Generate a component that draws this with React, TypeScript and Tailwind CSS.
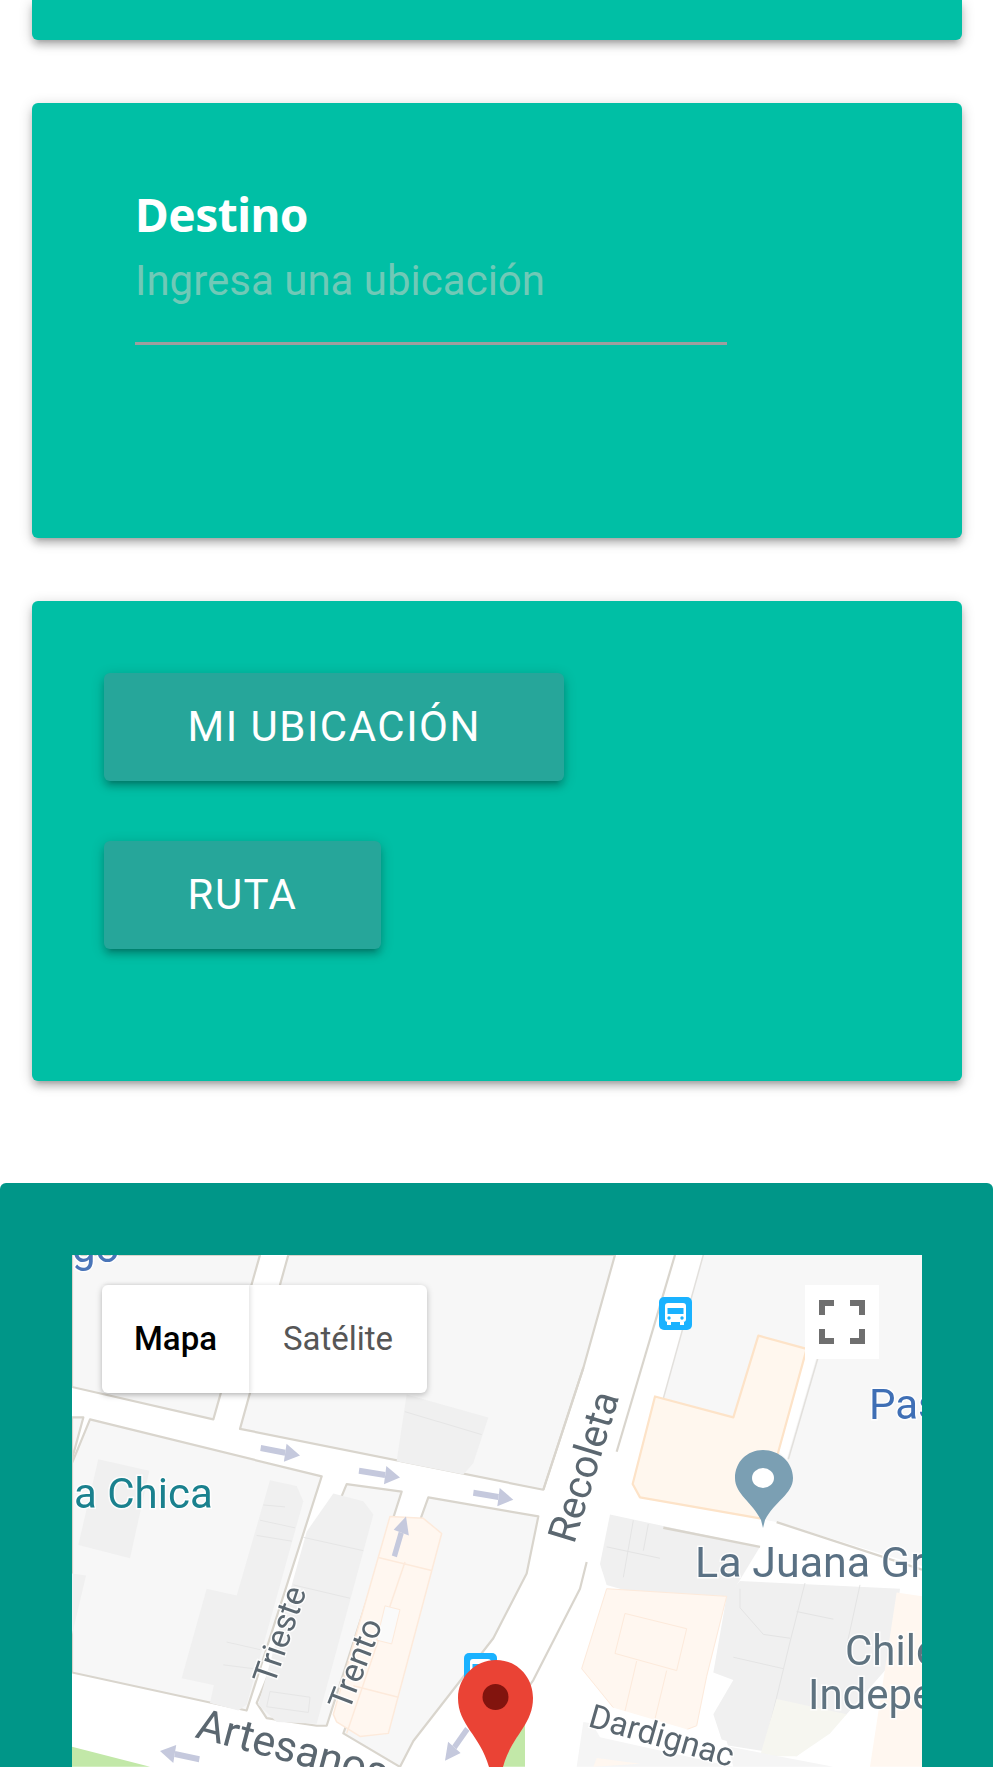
const scale = "scale(0.33333,0.38066)";
const elevation = "shadow-[0_6px_6px_rgba(0,0,0,0.14),0_8px_3px_-6px_rgba(0,0,0,0.12),0_3px_14px_rgba(0,0,0,0.2)]";

function Arrow({ x1, y1, x2, y2 }: { x1: number; y1: number; x2: number; y2: number }) {
  const dx = x2 - x1;
  const dy = y2 - y1;
  const len = Math.hypot(dx, dy);
  const ux = dx / len;
  const uy = dy / len;
  const bx = x2 - ux * 45;
  const by = y2 - uy * 45;
  const pts = `${x2},${y2} ${bx - uy * 24},${by + ux * 24} ${bx + uy * 24},${by - ux * 24}`;
  return (
    <g>
      <line x1={x1} y1={y1} x2={bx} y2={by} stroke="#c5c9dd" strokeWidth={16} />
      <polygon points={pts} fill="#c5c9dd" />
    </g>
  );
}

function Label(props: { x: number; y: number; size: number; fill: string; rotate?: number; children: string }) {
  const { x, y, size, fill, rotate, children } = props;
  return (
    <text
      x={x}
      y={y}
      fontSize={size}
      fill={fill}
      fontFamily="Roboto, sans-serif"
      stroke="#ffffff"
      strokeWidth={3}
      strokeOpacity={0.8}
      paintOrder="stroke"
      transform={rotate ? `rotate(${rotate} ${x} ${y})` : undefined}
    >
      {children}
    </text>
  );
}

function Bus({ x, y }: { x: number; y: number }) {
  return (
    <g transform={`translate(${x} ${y})`}>
      <rect width={33} height={33} rx={5} fill="#1ab2ff" />
      <rect x={6} y={6} width={21} height={19} rx={3} fill="#ffffff" />
      <rect x={8.5} y={11} width={16} height={6} fill="#1ab2ff" />
      <circle cx={10} cy={21} r={1.7} fill="#1ab2ff" />
      <circle cx={23} cy={21} r={1.7} fill="#1ab2ff" />
      <rect x={8} y={25} width={4} height={3} fill="#ffffff" />
      <rect x={21} y={25} width={4} height={3} fill="#ffffff" />
    </g>
  );
}

function MapArt() {
  const block = "#f7f7f7";
  const edge = "#d9d5cd";
  const gray = "#f0f0f0";
  const orange = "#fff7f0";
  const orangeEdge = "#fdeadb";
  return (
    <svg className="block h-full w-full blur-[0.5px]" viewBox="72 1255 850 512">
      <rect x={72} y={1255} width={850} height={512} fill="#ffffff" />
      <g transform={`translate(60 1170) ${scale}`} strokeLinejoin="round">
        <g stroke={edge} strokeWidth={2.2}>
          <polygon points="36,223 600,223 460,655 36,570" fill={block} vectorEffect="non-scaling-stroke" />
          <polygon points="685,223 1665,223 1570,520 1450,840 540,680" fill={block} vectorEffect="non-scaling-stroke" />
          <polygon points="36,770 90,655 785,805 560,1420 36,1320" fill={block} vectorEffect="non-scaling-stroke" />
          <polygon points="860,825 1025,845 800,1460 770,1460 620,1440 590,1400" fill={block} vectorEffect="non-scaling-stroke" />
          <polygon points="1105,860 1435,910 1400,1060 1300,1230 1060,1500 1020,1568 850,1480" fill={block} vectorEffect="non-scaling-stroke" />
          <polygon points="36,650 70,650 36,760" fill={block} vectorEffect="non-scaling-stroke" />
        </g>
        <g fill={gray}>
          <polygon points="115,760 268,790 210,1020 55,985" />
          <polygon points="36,1060 78,1065 36,1220" />
          <polygon points="440,1100 540,1120 470,1355 365,1335" />
          <polygon points="630,815 710,830 730,870 560,1405 535,1420 450,1400 490,1240" />
          <polygon points="820,850 910,870 940,905 770,1455 650,1450 595,1405 740,950" />
          <polygon points="1040,590 1285,650 1240,770 1210,800 1010,765" />
        </g>
        <g stroke="#e6e6e6" strokeWidth={1} fill="none">
          <polyline points="610,880 675,885" vectorEffect="non-scaling-stroke" />
          <polyline points="600,920 705,940" vectorEffect="non-scaling-stroke" />
          <polyline points="590,960 695,975" vectorEffect="non-scaling-stroke" />
          <polyline points="500,1240 600,1260" vectorEffect="non-scaling-stroke" />
          <polyline points="490,1300 580,1310" vectorEffect="non-scaling-stroke" />
          <polyline points="730,965 910,1000" vectorEffect="non-scaling-stroke" />
          <polyline points="700,1090 870,1125" vectorEffect="non-scaling-stroke" />
          <polyline points="630,1370 750,1385 745,1425 620,1410 630,1370" vectorEffect="non-scaling-stroke" />
          <polyline points="1035,635 1265,695" vectorEffect="non-scaling-stroke" />
        </g>
        <polygon
          points="990,910 1090,915 1145,955 985,1480 900,1488 830,1450 820,1430"
          fill={orange}
          stroke={orangeEdge}
          strokeWidth={1.5}
          vectorEffect="non-scaling-stroke"
        />
        <g stroke={orangeEdge} strokeWidth={1.5} fill="none">
          <polyline points="955,1018 1115,1052" vectorEffect="non-scaling-stroke" />
          <polyline points="880,1355 1015,1385" vectorEffect="non-scaling-stroke" />
          <polyline points="1035,1030 860,1480" vectorEffect="non-scaling-stroke" />
        </g>
        <polygon points="975,1145 1020,1155 995,1245 950,1235" fill="#fafafa" stroke={orangeEdge} vectorEffect="non-scaling-stroke" />
        <polygon points="36,1515 270,1568 36,1568" fill="#c2e8a8" />
        <polygon points="1395,1450 1320,1568 1395,1568" fill="#c2e8a8" />
        <Arrow x1={602} y1={730} x2={720} y2={750} />
        <Arrow x1={897} y1={790} x2={1020} y2={808} />
        <Arrow x1={1240} y1={848} x2={1360} y2={866} />
        <Arrow x1={1003} y1={1015} x2={1038} y2={910} />
        <Arrow x1={418} y1={1548} x2={300} y2={1526} />
        <Arrow x1={1222} y1={1468} x2={1155} y2={1552} />
      </g>
      <g transform={`translate(500 1170) ${scale}`} strokeLinejoin="round">
        <polygon points="610,223 1266,223 1266,1040 830,925 420,860 490,600" fill={block} />
        <polyline points="610,223 490,600" fill="none" stroke="#e2e0dc" strokeWidth={1.5} vectorEffect="non-scaling-stroke" />
        <polyline points="525,223 350,740" fill="none" stroke={edge} strokeWidth={2.2} vectorEffect="non-scaling-stroke" />
        <polygon points="920,470 950,490 860,760 835,740" fill="#ffffff" />
        <polyline points="955,490 865,760" fill="none" stroke="#e2e0dc" strokeWidth={1.5} vectorEffect="non-scaling-stroke" />
        <polyline points="830,925 1266,1050" fill="none" stroke={edge} strokeWidth={2.2} vectorEffect="non-scaling-stroke" />
        <polygon
          points="465,595 700,650 775,435 920,470 835,740 780,915 420,860 398,825"
          fill="#fff7ee"
          stroke="#fde3c8"
          strokeWidth={2.2}
          vectorEffect="non-scaling-stroke"
        />
        <polygon points="330,905 490,935 780,990 690,1120 460,1125 320,1090 300,1035" fill={gray} />
        <g fill="none" stroke="#e4e4e4" strokeWidth={1}>
          <polyline points="400,920 370,1070" vectorEffect="non-scaling-stroke" />
          <polyline points="445,930 430,1000" vectorEffect="non-scaling-stroke" />
          <polyline points="320,990 480,1020" vectorEffect="non-scaling-stroke" />
        </g>
        <polyline points="490,940 780,990" fill="none" stroke={edge} strokeWidth={2.5} vectorEffect="non-scaling-stroke" />
        <polygon points="720,1080 1200,1100 1170,1300 1040,1430 1000,1460 890,1540 670,1510 640,1430 700,1340 640,1320 680,1120" fill={gray} />
        <g fill="none" stroke="#e4e4e4" strokeWidth={1}>
          <polyline points="915,1085 870,1240 790,1530" vectorEffect="non-scaling-stroke" />
          <polyline points="890,1160 1000,1180" vectorEffect="non-scaling-stroke" />
          <polyline points="700,1280 850,1310" vectorEffect="non-scaling-stroke" />
          <polyline points="1080,1090 1040,1250" vectorEffect="non-scaling-stroke" />
          <polyline points="720,1100 720,1150 790,1220 870,1230" vectorEffect="non-scaling-stroke" />
        </g>
        <polygon points="320,1100 680,1120 620,1330 590,1460 530,1480 370,1445 245,1310" fill={orange} stroke={orangeEdge} vectorEffect="non-scaling-stroke" />
        <polygon points="375,1165 560,1205 530,1315 345,1270" fill="none" stroke={orangeEdge} vectorEffect="non-scaling-stroke" />
        <polyline points="410,1290 370,1440" fill="none" stroke={orangeEdge} vectorEffect="non-scaling-stroke" />
        <polyline points="500,1315 460,1460" fill="none" stroke={orangeEdge} vectorEffect="non-scaling-stroke" />
        <polygon points="1190,1110 1266,1120 1266,1568 1110,1568" fill={orange} />
        <polygon points="830,1390 1040,1430 990,1480 890,1540 780,1540" fill="#f6f6f0" />
        <polygon points="250,1450 600,1500 1000,1568 230,1568" fill="#f5f5f5" />
        <polygon points="290,1545 420,1560 280,1568" fill={orange} />
        <polygon points="265,1345 310,1405 680,1500 700,1568 300,1490 260,1430" fill="#ffffff" />
        <polyline points="130,840 250,520" fill="none" stroke={edge} strokeWidth={2.2} vectorEffect="non-scaling-stroke" />
        <polyline points="260,1030 240,1100 100,1340 60,1390" fill="none" stroke={edge} strokeWidth={2.2} vectorEffect="non-scaling-stroke" />
      </g>
      <Bus x={659} y={1297} />
      <Bus x={464} y={1653} />
      <Label x={72} y={1262} size={42} fill="#4a75b8">go</Label>
      <Label x={74} y={1508} size={42} fill="#1a818e">a Chica</Label>
      <Label x={869} y={1419} size={42} fill="#3f6fb5">Pas</Label>
      <Label x={695} y={1577} size={43} fill="#5a7184">La Juana Gr</Label>
      <Label x={845} y={1665} size={42} fill="#5f7380">Chile</Label>
      <Label x={808} y={1709} size={42} fill="#5f7380">Indepe</Label>
      <Label x={574} y={1545} size={40} fill="#5b6770" rotate={-73}>Recoleta</Label>
      <Label x={274} y={1686} size={33} fill="#5b6770" rotate={-71}>Trieste</Label>
      <Label x={349} y={1712} size={33} fill="#5b6770" rotate={-69}>Trento</Label>
      <Label x={194} y={1737} size={43} fill="#5b6770" rotate={15}>Artesanos</Label>
      <Label x={587} y={1726} size={33} fill="#5b6770" rotate={16}>Dardignac</Label>
      <path
        d="M763 1450 C747 1450 735 1462 735 1478 C735 1494 752 1502 761 1520 L763 1528 L765 1520 C774 1502 793 1494 793 1478 C793 1462 779 1450 763 1450 Z"
        fill="#7b9fb3"
      />
      <ellipse cx={763} cy={1478} rx={11} ry={10} fill="#ffffff" />
      <path
        d="M496 1660 C475 1660 458 1677 458 1698 C458 1725 480 1735 489 1767 L503 1767 C512 1735 533 1725 533 1698 C533 1677 517 1660 496 1660 Z"
        fill="#ea4335"
      />
      <ellipse cx={495.5} cy={1697} rx={13} ry={13} fill="#82140e" />
    </svg>
  );
}

function Btn({ children }: { children: string }) {
  return (
    <button className={`block h-[108px] rounded-[6px] bg-[#26a69a] px-[83.5px] text-[42px] leading-[104px] tracking-[1.5px] text-white font-['Roboto',sans-serif] ${elevation}`}>
      {children}
    </button>
  );
}

export default function App() {
  return (
    <div className="h-[1767px] overflow-hidden bg-white font-['Roboto',sans-serif]">
      <div className={`ml-[32px] mr-[31px] h-[40px] rounded-b-[6px] bg-[#00bfa5] ${elevation}`} />
      <div className={`ml-[32px] mr-[31px] mt-[63px] h-[435px] rounded-[6px] bg-[#00bfa5] pl-[103px] pt-[83px] ${elevation}`}>
        <div className="h-[56px] text-[46px] leading-[56px] font-bold tracking-[-0.5px] text-white font-['Noto_Sans',sans-serif]">
          Destino
        </div>
        <div className="w-[592px] border-b-[3px] border-[#9e9e9e] pb-[36px] pt-[14px] text-[42px] leading-[50px] text-[#70c9b7]">
          Ingresa una ubicación
        </div>
      </div>
      <div className={`ml-[32px] mr-[31px] mt-[63px] flex h-[480px] flex-col items-start gap-[60px] rounded-[6px] bg-[#00bfa5] pl-[72px] pt-[72px] ${elevation}`}>
        <Btn>MI UBICACIÓN</Btn>
        <Btn>RUTA</Btn>
      </div>
      <div className="mt-[102px] rounded-t-[6px] bg-[#009688] pl-[72px] pr-[71px] pt-[72px]">
        <div className="relative h-[512px] overflow-hidden">
          <MapArt />
          <div className="absolute left-[30px] top-[30px] flex h-[108px] w-[325px] rounded-[6px] bg-white text-[33px] shadow-[0_2px_6px_rgba(0,0,0,0.25)]">
            <div className="flex w-[147px] items-center justify-center font-medium text-black shadow-[2px_0_4px_rgba(0,0,0,0.1)]">Mapa</div>
            <div className="flex flex-1 items-center justify-center text-[#565656]">Satélite</div>
          </div>
          <div className="absolute left-[733px] top-[30px] flex h-[74px] w-[74px] items-center justify-center bg-white">
            <svg width="46" height="44" viewBox="0 0 46 44" fill="none" stroke="#6f6f6f" strokeWidth="6">
              <path d="M3 15V3H15M31 3H43V15M43 29V41H31M15 41H3V29" />
            </svg>
          </div>
        </div>
      </div>
    </div>
  );
}
